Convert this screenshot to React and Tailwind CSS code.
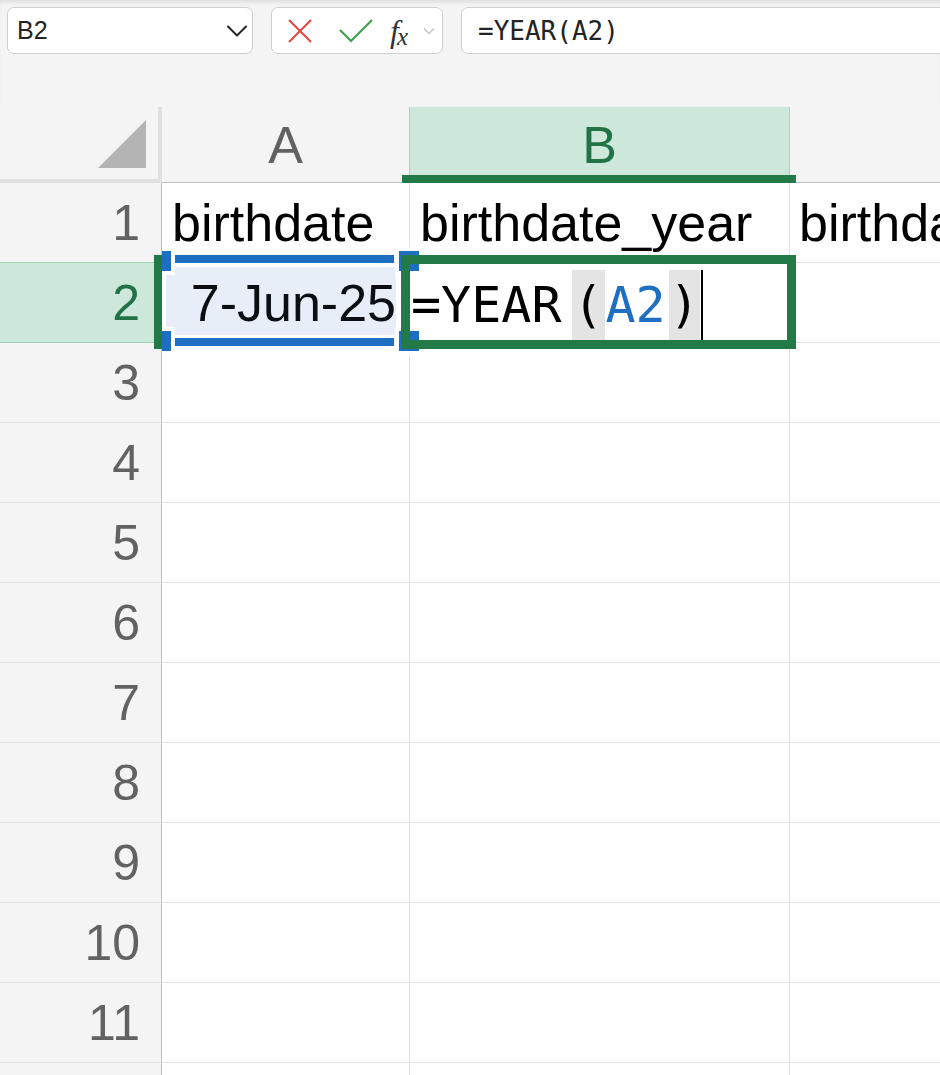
import React from "react";

const ROWS = [1, 2, 3, 4, 5, 6, 7, 8, 9, 10, 11, 12];

function Chevron({ className }) {
  return (
    <svg width="20" height="12" viewBox="0 0 20 12" className={className} fill="none">
      <polyline points="1,1.5 10,10.5 19,1.5" stroke="currentColor" strokeWidth="2" strokeLinecap="round" strokeLinejoin="round" />
    </svg>
  );
}

function Toolbar() {
  return (
    <div className="h-[107px] flex items-start pt-[7px] pl-[7px] shadow-[inset_0_4px_4px_-2px_rgba(0,0,0,0.10)]">
      <div className="w-[246px] h-[47px] shrink-0 bg-white border-[1.5px] border-[#cfcfcf] rounded-[7px] flex items-center justify-between pl-[9px] pr-[5px]">
        <span className="text-[25px] text-[#242424] leading-none">B2</span>
        <Chevron className="text-[#242424]" />
      </div>
      <div className="ml-[18px] w-[172px] h-[47px] shrink-0 bg-white border-[1.5px] border-[#cfcfcf] rounded-[7px] flex items-center pl-[16px]">
        <svg width="24" height="24" viewBox="0 0 24 24" fill="none">
          <path d="M1 1 L23 23 M23 1 L1 23" stroke="#e5473d" strokeWidth="2" />
        </svg>
        <svg width="34" height="24" viewBox="0 0 34 24" fill="none" className="ml-[27px]">
          <polyline points="1,11 12,22 33,1" stroke="#41a04c" strokeWidth="2.2" strokeLinejoin="miter" />
        </svg>
        <div className="ml-[17px] w-[24px] flex items-baseline text-[#333] font-['Liberation_Serif',serif] italic leading-none">
          <span className="text-[32px]">f</span>
          <span className="text-[25px] translate-y-[3px] -ml-[2px]">x</span>
        </div>
        <svg width="12" height="8" viewBox="0 0 12 8" fill="none" className="ml-[9px]">
          <polyline points="1,1.5 6,6.5 11,1.5" stroke="#c4c4c4" strokeWidth="1.5" />
        </svg>
      </div>
      <div className="ml-[18px] w-[520px] h-[47px] shrink-0 bg-white border-[1.5px] border-[#cfcfcf] rounded-[7px] flex items-center pl-[16px]">
        <span className="font-['DejaVu_Sans_Mono',monospace] text-[26px] text-[#242424] leading-none">=YEAR(A2)</span>
      </div>
    </div>
  );
}

function HeaderRow() {
  return (
    <div className="flex h-[76px]">
      <div className="w-[162px] h-[76px] shrink-0 border-r-4 border-b-4 border-[#e0e0e0] flex items-end justify-end pr-[12px] pb-[11px]">
        <svg width="48" height="48" viewBox="0 0 48 48">
          <polygon points="48,0 48,48 0,48" fill="#b4b4b4" />
        </svg>
      </div>
      <div className="w-[247px] shrink-0 border-b border-[#bdbdbd] flex items-center justify-center text-[52px] leading-none text-[#626262]">
        A
      </div>
      <div className="w-[381px] shrink-0 bg-[#cde8da] border-x border-[#a6d6b8] border-b border-b-[#bdbdbd] flex items-center justify-center text-[52px] leading-none text-[#217346]">
        B
      </div>
      <div className="flex-1 border-b border-[#bdbdbd]" />
    </div>
  );
}

function Row({ n }) {
  const selected = n === 2;
  const headerCls = selected
    ? "bg-[#cde8da] text-[#217346] border-b-[#9fd2b2]"
    : n === 1
    ? "bg-[#f4f4f4] text-[#626262] border-b-[#9fd2b2]"
    : "bg-[#f4f4f4] text-[#626262] border-b-[#e0e0e0]";
  return (
    <div className="flex h-[80px]">
      <div
        className={`w-[162px] shrink-0 border-r border-r-[#bdbdbd] border-b flex items-center justify-end pr-[21px] text-[50px] leading-none ${headerCls}`}
      >
        {n <= 11 ? n : null}
      </div>
      <div className="w-[248px] shrink-0 bg-white border-r border-b border-[#e1e1e1] flex items-center overflow-hidden">
        {n === 1 && <span className="pl-[10px] text-[52px] leading-none text-black">birthdate</span>}
        {n === 2 && (
          <span className="ml-auto pr-[13px] text-[52px] leading-none text-[#0b0f14] relative z-10">7-Jun-25</span>
        )}
      </div>
      <div className="w-[380px] shrink-0 bg-white border-r border-b border-[#e1e1e1] flex overflow-hidden">
        {n === 1 && (
          <span className="self-center pl-[10px] text-[52px] leading-none text-black whitespace-nowrap">birthdate_year</span>
        )}
        {n === 2 && (
          <div className="flex items-stretch pt-[7px] pb-[2px] font-['DejaVu_Sans_Mono',monospace] text-[50px] leading-none text-black">
            <span className="flex items-center pl-[1px]">=YEAR</span>
            <span className="ml-[10px] w-[33px] bg-[#e4e4e4] flex items-center justify-center">(</span>
            <span className="ml-[1px] flex items-center text-[#1e6fc1]">A2</span>
            <span className="ml-[3px] w-[31px] bg-[#e4e4e4] flex items-center justify-center">)</span>
            <span className="ml-[1px] w-[2px] bg-black" />
          </div>
        )}
      </div>
      <div className="flex-1 bg-white border-b border-[#e1e1e1] flex items-center overflow-hidden">
        {n === 1 && (
          <span className="pl-[9px] text-[52px] leading-none text-black whitespace-nowrap">birthdate_month</span>
        )}
      </div>
    </div>
  );
}

export default function App() {
  return (
    <div className="relative w-[940px] h-[1075px] overflow-hidden bg-[#f4f4f4] font-['Liberation_Sans',Arial,sans-serif]">
      <Toolbar />
      <HeaderRow />
      {ROWS.map((n) => (
        <Row key={n} n={n} />
      ))}

      {/* selection overlays over cell area */}
      <div className="absolute left-[162px] top-[183px] right-0 bottom-0 overflow-hidden pointer-events-none">
        <div className="absolute left-[4px] top-[84px] w-[230px] h-[68px] bg-[#e7eef7]" />
        <div className="absolute left-[12px] top-[72px] w-[220px] h-[8px] bg-[#1e6fc1]" />
        <div className="absolute left-[12px] top-[155px] w-[220px] h-[8px] bg-[#1e6fc1]" />
        <div className="absolute left-[-15px] top-[64px] w-[28px] h-[28px] bg-[#1e6fc1] border-4 border-white" />
        <div className="absolute left-[233px] top-[64px] w-[28px] h-[28px] bg-[#1e6fc1] border-4 border-white" />
        <div className="absolute left-[-15px] top-[144px] w-[28px] h-[28px] bg-[#1e6fc1] border-4 border-white" />
        <div className="absolute left-[233px] top-[144px] w-[28px] h-[28px] bg-[#1e6fc1] border-4 border-white" />
        <div className="absolute left-[239px] top-[72px] w-[395px] h-[94px] border-[9px] border-[#237a47]" />
      </div>

      {/* header selection bars */}
      <div className="absolute left-[402px] top-[175px] w-[394px] h-[8px] bg-[#237a47]" />
      <div className="absolute left-[154px] top-[255px] w-[8px] h-[94px] bg-[#237a47]" />
    </div>
  );
}
